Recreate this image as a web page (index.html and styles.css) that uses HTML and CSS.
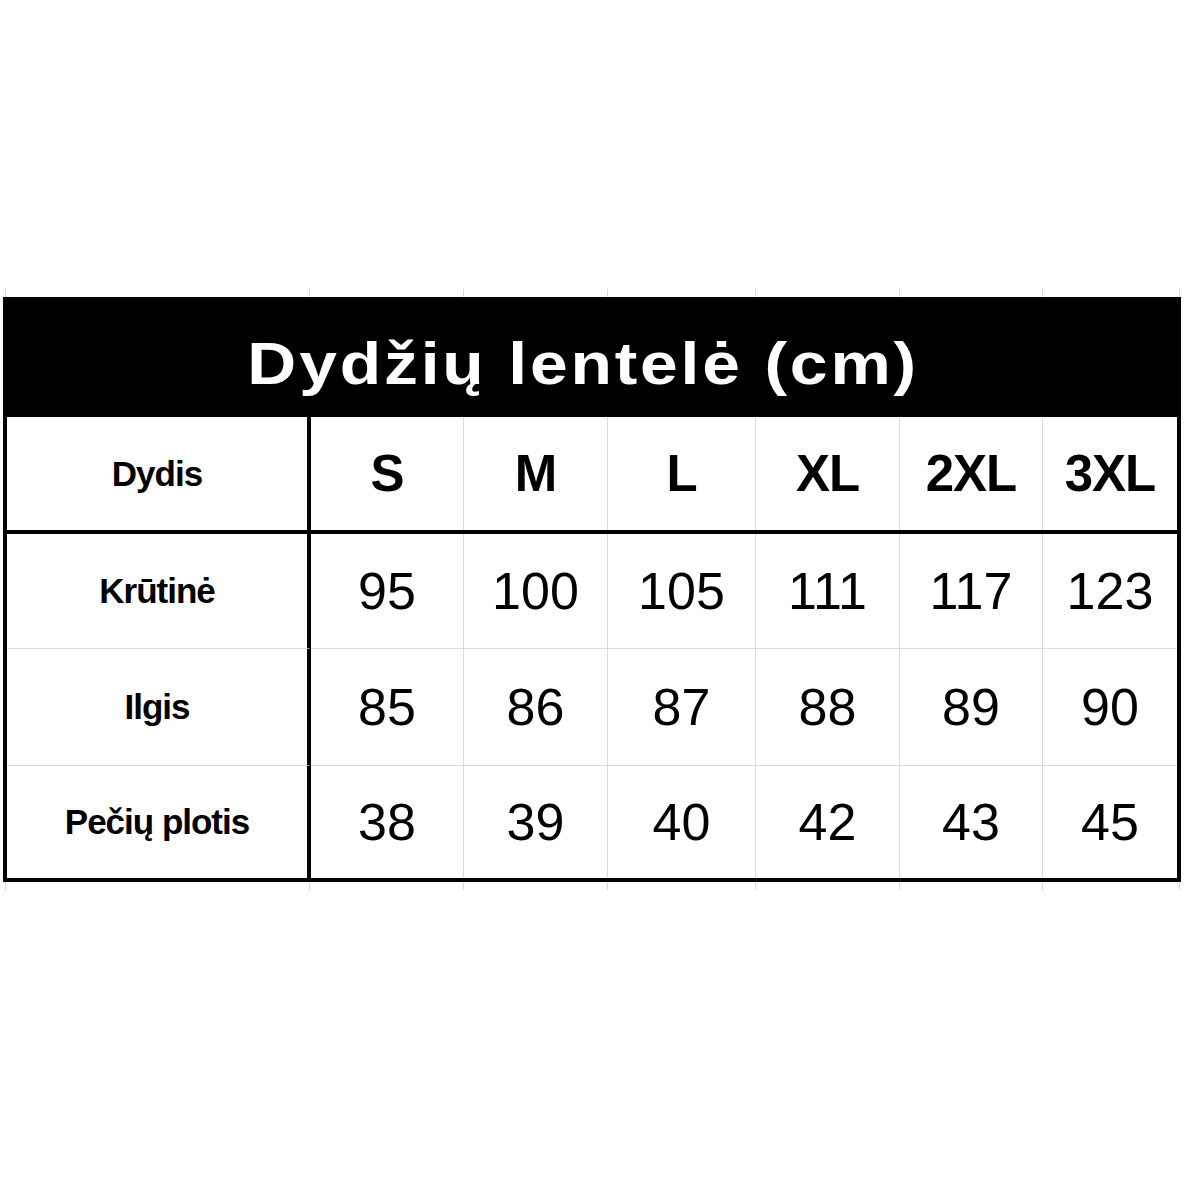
FILE: index.html
```html
<!DOCTYPE html>
<html lang="lt">
<head>
<meta charset="utf-8">
<title>Dydžių lentelė</title>
<link rel="stylesheet" href="styles.css">
</head>
<body>
<div class="sheet">
  <div class="stub">
    <span class="s1"></span><span class="s2"></span><span class="s3"></span><span class="s4"></span><span class="s5"></span><span class="s6"></span><span class="s7"></span>
  </div>
  <div class="table">
    <div class="title"><span class="title-text">Dydžių lentelė (cm)</span></div>
    <div class="row head">
      <div class="cell label">Dydis</div>
      <div class="cell size first">S</div>
      <div class="cell size">M</div>
      <div class="cell size">L</div>
      <div class="cell size">XL</div>
      <div class="cell size">2XL</div>
      <div class="cell size">3XL</div>
    </div>
    <div class="row r1">
      <div class="cell label">Krūtinė</div>
      <div class="cell num first">95</div>
      <div class="cell num">100</div>
      <div class="cell num">105</div>
      <div class="cell num">111</div>
      <div class="cell num">117</div>
      <div class="cell num">123</div>
    </div>
    <div class="row r2 lined">
      <div class="cell label">Ilgis</div>
      <div class="cell num first">85</div>
      <div class="cell num">86</div>
      <div class="cell num">87</div>
      <div class="cell num">88</div>
      <div class="cell num">89</div>
      <div class="cell num">90</div>
    </div>
    <div class="row r3 lined">
      <div class="cell label">Pečių plotis</div>
      <div class="cell num first">38</div>
      <div class="cell num">39</div>
      <div class="cell num">40</div>
      <div class="cell num">42</div>
      <div class="cell num">43</div>
      <div class="cell num">45</div>
    </div>
  </div>
  <div class="stub">
    <span class="s1"></span><span class="s2"></span><span class="s3"></span><span class="s4"></span><span class="s5"></span><span class="s6"></span><span class="s7"></span>
  </div>
</div>
</body>
</html>
```

FILE: styles.css
```css
html, body {
  margin: 0;
  padding: 0;
  background: #ffffff;
}

body {
  font-family: "Liberation Sans", Arial, sans-serif;
  color: #000;
}

.sheet {
  margin: 289px 0 0 3px;
  width: 1178px;
}

.stub {
  display: flex;
  height: 8px;
  margin-left: 2px;
}

.stub span {
  display: block;
  height: 100%;
  border-left: 1px solid #dcdcdc;
  box-sizing: border-box;
}

.stub .s1 { width: 304px; }
.stub .s2 { width: 154px; }
.stub .s3 { width: 144px; }
.stub .s4 { width: 148px; }
.stub .s5 { width: 144px; }
.stub .s6 { width: 143px; }
.stub .s7 { width: 138px; border-right: 1px solid #dcdcdc; }

.table {
  border: 4px solid #000;
  width: 1178px;
  box-sizing: border-box;
}

.title {
  background: #000;
  height: 116px;
  display: flex;
  align-items: center;
  justify-content: center;
  padding: 9px 18px 0 0;
  box-sizing: border-box;
}

.title-text {
  display: inline-block;
  color: #fff;
  font-weight: bold;
  font-size: 60px;
  letter-spacing: 2.5px;
  transform: scaleX(1.13);
}

.row {
  display: grid;
  grid-template-columns: 304px 152px 144px 148px 144px 143px 135px;
}

.row.head {
  height: 117px;
  border-bottom: 4px solid #000;
  box-sizing: border-box;
}

.row.r1 { height: 114px; }
.row.r2 { height: 117px; }
.row.r3 { height: 113px; }

.row.lined .cell {
  border-top: 1px solid #dcdcdc;
}

.cell {
  display: flex;
  align-items: center;
  justify-content: center;
  border-left: 1px solid #dcdcdc;
  box-sizing: border-box;
}

.cell.label {
  border-left: none;
  border-right: 4px solid #000;
  font-weight: bold;
  font-size: 35px;
  letter-spacing: -1px;
}

.cell.first {
  border-left: none;
}

.cell.size {
  font-weight: bold;
  font-size: 51px;
  letter-spacing: -1px;
}

.cell.num {
  font-size: 52px;
}
```
